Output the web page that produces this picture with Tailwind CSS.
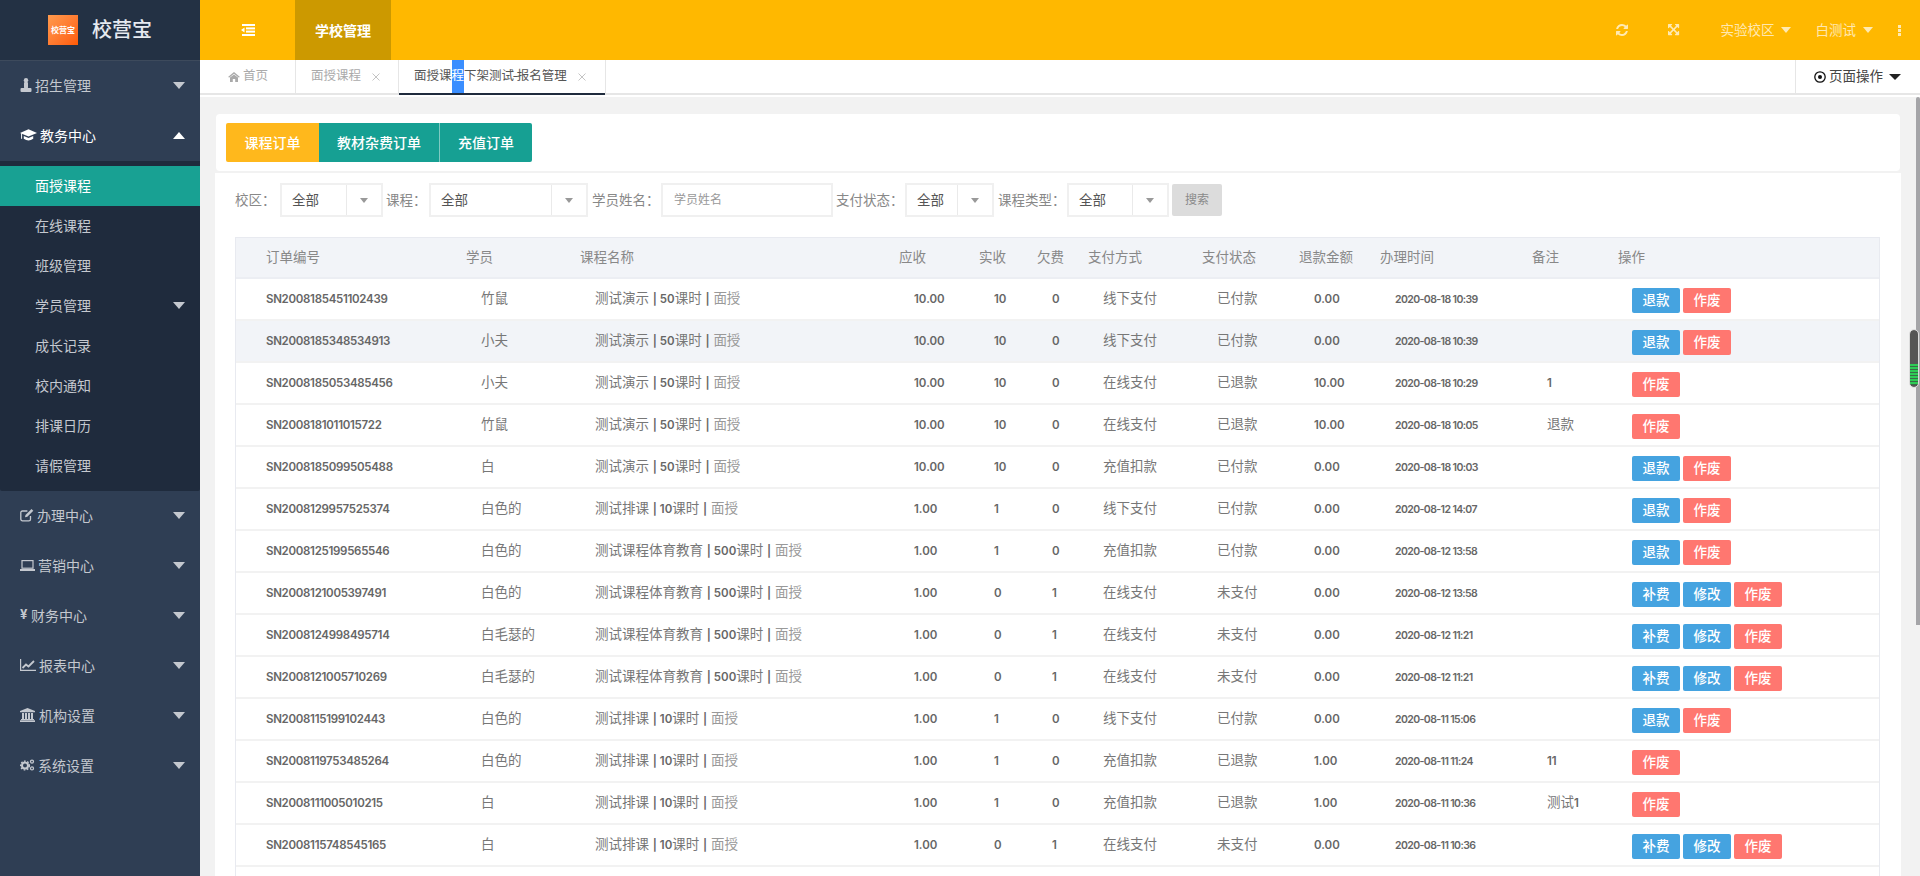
<!DOCTYPE html>
<html lang="zh">
<head>
<meta charset="utf-8">
<title>校营宝</title>
<script src="https://cdn.jsdelivr.net/npm/@tailwindcss/browser@4"></script>
</head>
<body class="m-0 overflow-hidden">
<div class="relative flex w-[1920px] h-[876px] overflow-hidden bg-[#f2f2f2] font-['Inter','Noto_Sans_CJK_SC',sans-serif] text-[13.5px] text-[#777]">

  <!-- sidebar -->
  <aside class="w-[200px] shrink-0 flex flex-col bg-[#2f3e54] text-[14px] text-[#c4c8cf]">
    <div class="h-[61px] shrink-0 flex items-center pl-[48px] gap-[14px] bg-[#233144] border-b border-[#3d4a5c]">
      <div class="w-[30px] h-[30px] flex items-center justify-center bg-gradient-to-br from-[#ff9a4d] to-[#ff5a00] text-white text-[8px] font-bold whitespace-nowrap">校营宝</div>
      <span class="text-[20px] font-medium text-[#e6eaf0]">校营宝</span>
    </div>
    <nav class="[&>div]:h-[50px] [&>div]:flex [&>div]:items-center [&>div]:pl-[20px] [&>div]:pr-[15px] [&>div]:pb-[2px]">
      <div>
        <svg class="w-[12px] h-[14px] mr-[3px]" viewBox="0 0 12 14" fill="currentColor"><circle cx="6" cy="2.3" r="2.2"/><rect x="4" y="4" width="4" height="6.5" rx="1"/><rect x="0.5" y="10" width="11" height="4" rx="1"/></svg>
        <span>招生管理</span>
        <i class="ml-auto w-0 h-0 border-x-[6px] border-x-transparent border-t-[7px] border-t-[#c4c8cf]"></i>
      </div>
      <div class="text-white">
        <svg class="w-[17px] h-[13px] mr-[3px]" viewBox="0 0 18 13" fill="currentColor"><polygon points="9,0 18,3.8 9,7.6 0,3.8"/><path d="M4 7 L9 9.2 L14 7 V10 Q9 13.5 4 10 Z"/><rect x="1.2" y="4" width="1" height="6"/></svg>
        <span>教务中心</span>
        <i class="ml-auto w-0 h-0 border-x-[6px] border-x-transparent border-b-[7px] border-b-white"></i>
      </div>
    </nav>
    <ul class="h-[330px] py-[5px] bg-[#1f2b3d] rounded-b-[2px] [&>li]:h-[40px] [&>li]:flex [&>li]:items-center [&>li]:pl-[35px] [&>li]:pr-[15px] [&>li]:pb-[2px]">
      <li class="bg-[#18a193] text-white">面授课程</li>
      <li>在线课程</li>
      <li>班级管理</li>
      <li>学员管理<i class="ml-auto w-0 h-0 border-x-[6px] border-x-transparent border-t-[7px] border-t-[#c4c8cf]"></i></li>
      <li>成长记录</li>
      <li>校内通知</li>
      <li>排课日历</li>
      <li>请假管理</li>
    </ul>
    <nav class="[&>div]:h-[50px] [&>div]:flex [&>div]:items-center [&>div]:pl-[20px] [&>div]:pr-[15px] [&>div]:pb-[2px]">
      <div>
        <svg class="w-[14px] h-[14px] mr-[3px]" viewBox="0 0 14 14" fill="none" stroke="currentColor" stroke-width="1.3"><path d="M10.5 8v3.2a1.6 1.6 0 0 1-1.6 1.6H2.4a1.6 1.6 0 0 1-1.6-1.6V4.6A1.6 1.6 0 0 1 2.4 3h5"/><path d="M5.5 7 L11.5 1 L13.3 2.8 L7.3 8.8 L5 9.3 Z" fill="currentColor" stroke="none"/></svg>
        <span>办理中心</span>
        <i class="ml-auto w-0 h-0 border-x-[6px] border-x-transparent border-t-[7px] border-t-[#c4c8cf]"></i>
      </div>
      <div>
        <svg class="w-[15px] h-[11px] mr-[3px]" viewBox="0 0 15 11" fill="none" stroke="currentColor" stroke-width="1.2"><rect x="2" y="0.6" width="11" height="7.6"/><rect x="0" y="9" width="15" height="2" fill="currentColor" stroke="none"/></svg>
        <span>营销中心</span>
        <i class="ml-auto w-0 h-0 border-x-[6px] border-x-transparent border-t-[7px] border-t-[#c4c8cf]"></i>
      </div>
      <div>
        <span class="w-[8px] mr-[3px] font-bold text-[13px]">¥</span>
        <span>财务中心</span>
        <i class="ml-auto w-0 h-0 border-x-[6px] border-x-transparent border-t-[7px] border-t-[#c4c8cf]"></i>
      </div>
      <div>
        <svg class="w-[16px] h-[12px] mr-[3px]" viewBox="0 0 16 12" fill="none" stroke="currentColor"><path d="M0.6 0V11.4H16" stroke-width="1.2"/><path d="M2.5 9 L6 5.5 L8.5 7.5 L14 2" stroke-width="1.8"/></svg>
        <span>报表中心</span>
        <i class="ml-auto w-0 h-0 border-x-[6px] border-x-transparent border-t-[7px] border-t-[#c4c8cf]"></i>
      </div>
      <div>
        <svg class="w-[15px] h-[14px] mr-[4px]" viewBox="0 0 15 14" fill="currentColor"><polygon points="7.5,0 15,3 15,4.2 0,4.2 0,3"/><rect x="2" y="5" width="2" height="6"/><rect x="5" y="5" width="2" height="6"/><rect x="8" y="5" width="2" height="6"/><rect x="11" y="5" width="2" height="6"/><rect x="1" y="11" width="13" height="1"/><rect x="0" y="12.3" width="15" height="1.7"/></svg>
        <span>机构设置</span>
        <i class="ml-auto w-0 h-0 border-x-[6px] border-x-transparent border-t-[7px] border-t-[#c4c8cf]"></i>
      </div>
      <div>
        <svg class="w-[15px] h-[12px] mr-[3px]" viewBox="0 0 15 12" fill="none" stroke="currentColor"><circle cx="5" cy="6.5" r="3" stroke-width="2"/><circle cx="5" cy="6.5" r="4.4" stroke-width="1.4" stroke-dasharray="1.7 1.5"/><circle cx="12" cy="2.6" r="1.5" stroke-width="1.3"/><circle cx="12" cy="9.4" r="1.5" stroke-width="1.3"/></svg>
        <span>系统设置</span>
        <i class="ml-auto w-0 h-0 border-x-[6px] border-x-transparent border-t-[7px] border-t-[#c4c8cf]"></i>
      </div>
    </nav>
  </aside>

  <!-- main -->
  <div class="flex-1 flex flex-col min-w-0">
    <header class="h-[60px] shrink-0 flex items-center bg-[#ffb800] text-[13.5px] text-white/70">
      <div class="w-[95px] flex justify-center">
        <svg class="w-[14px] h-[12px]" viewBox="0 0 14 12" fill="white"><rect x="1" y="0" width="13" height="2"/><rect x="5" y="3.4" width="9" height="2"/><rect x="5" y="6.6" width="9" height="2"/><rect x="1" y="10" width="13" height="2"/><polygon points="0,6 3.5,3.5 3.5,8.5"/></svg>
      </div>
      <div class="w-[96px] h-full flex items-center justify-center bg-[#cc9900] text-[14px] text-white font-semibold">学校管理</div>
      <div class="ml-auto flex items-center pr-[19px]">
        <svg class="w-[14px] h-[14px] mr-[39px]" viewBox="0 0 1792 1792" fill="currentColor"><path d="M1639 1056q0 5-1 7-64 268-268 434.5t-478 166.5q-146 0-282.5-55t-243.5-157l-129 129q-19 19-45 19t-45-19-19-45v-448q0-26 19-45t45-19h448q26 0 45 19t19 45-19 45l-137 137q71 66 161 102t187 36q134 0 250-65t186-179q11-17 53-117 8-23 30-23h192q13 0 22.5 9.5t9.5 22.5zm25-800v448q0 26-19 45t-45 19h-448q-26 0-45-19t-19-45 19-45l138-138q-148-137-349-137-134 0-250 65t-186 179q-11 17-53 117-8 23-30 23h-199q-13 0-22.5-9.5t-9.5-22.5v-7q65-268 270-434.5t480-166.5q146 0 284 55.5t245 156.5l130-129q19-19 45-19t45 19 19 45z"/></svg>
        <svg class="w-[13px] h-[13px] mr-[40px]" viewBox="0 0 1792 1792" fill="currentColor"><path d="M1283 413l-355 355 355 355 144-144q29-31 70-14 39 17 39 59v448q0 26-19 45t-45 19h-448q-42 0-59-40-17-39 14-69l144-144-355-355-355 355 144 144q31 30 14 69-17 40-59 40h-448q-26 0-45-19t-19-45v-448q0-42 40-59 39-17 69 14l144 144 355-355-355-355-144 144q-19 19-45 19-9 0-24-5-40-17-40-59v-448q0-26 19-45t45-19h448q42 0 59 40 17 39-14 69l-144 144 355 355 355-355-144-144q-31-30-14-69 17-40 59-40h448q26 0 45 19t19 45v448q0 42-39 59-13 5-25 5-26 0-45-19z"/></svg>
        <span>实验校区</span>
        <i class="ml-[6px] mr-[25px] w-0 h-0 border-x-[5.5px] border-x-transparent border-t-[6px] border-t-white/70"></i>
        <span>白测试</span>
        <i class="ml-[7px] mr-[25px] w-0 h-0 border-x-[5.5px] border-x-transparent border-t-[6px] border-t-white/70"></i>
        <div class="flex flex-col gap-[1px] [&>i]:block [&>i]:w-[3px] [&>i]:h-[3px] [&>i]:bg-white/70"><i></i><i></i><i></i></div>
      </div>
    </header>

    <div class="shrink-0 bg-white pb-[2px]">
      <div class="h-[35px] flex border-b-2 border-[#e6e6e6] text-[12.5px] text-[#aaa]">
        <div class="w-[96px] flex items-center pl-[28px] border-r border-[#e6e6e6]">
          <svg class="w-[12px] h-[10px] mr-[3px]" viewBox="0 0 12 10" fill="currentColor"><polygon points="6,0 12,5 10.6,5.6 6,1.8 1.4,5.6 0,5"/><polygon points="2,5.6 6,2.6 10,5.6 10,10 7.2,10 7.2,7 4.8,7 4.8,10 2,10"/></svg>
          <span>首页</span>
        </div>
        <div class="w-[103px] flex items-center pl-[15px] border-r border-[#e6e6e6]">
          <span>面授课程</span>
          <svg class="w-[8px] h-[8px] ml-[11px]" viewBox="0 0 8 8" stroke="#c4c4c4" stroke-width="1"><path d="M0.5 0.5 L7.5 7.5 M7.5 0.5 L0.5 7.5"/></svg>
        </div>
        <div class="relative w-[207px] h-[33px] flex items-center pl-[15px] border-r border-[#e6e6e6] text-[#555]">
          <span>面授课</span><span class="self-stretch flex items-center bg-[#3a8eff] text-white">程</span><span>下架测试<span class="mx-[-1.5px]">-</span>报名管理</span>
          <svg class="w-[8px] h-[8px] ml-[11px]" viewBox="0 0 8 8" stroke="#c4c4c4" stroke-width="1"><path d="M0.5 0.5 L7.5 7.5 M7.5 0.5 L0.5 7.5"/></svg>
          <div class="absolute left-0 right-0 top-[33px] h-[2px] bg-[#1f2b3d]"></div>
        </div>
        <div class="ml-auto w-[125px] flex items-center pl-[18px] border-l border-[#e6e6e6] text-[13.5px] text-[#444]">
          <svg class="w-[12px] h-[12px] mr-[3px]" viewBox="0 0 12 12"><circle cx="6" cy="6" r="5.2" fill="none" stroke="#111" stroke-width="1.3"/><circle cx="6" cy="6" r="2" fill="#111"/></svg>
          <span>页面操作</span>
          <i class="ml-[6px] w-0 h-0 border-x-[6px] border-x-transparent border-t-[6px] border-t-[#222]"></i>
        </div>
      </div>
    </div>

    <main class="flex-1 min-h-0 pt-[17px] pl-[15px] pr-[19px]">
      <div class="h-[57px] ml-[1px] mr-[1px] pt-[9px] pl-[10px] bg-white rounded-[4px]">
        <div class="flex h-[39px] text-[14px] font-medium text-white [&>div]:flex [&>div]:items-center [&>div]:justify-center [&>div]:pb-[1px]">
          <div class="w-[93px] bg-[#ffb81c] rounded-l-[2px]">课程订单</div>
          <div class="w-[121px] bg-[#16a093] border-r border-[#7fcac2]">教材杂费订单</div>
          <div class="w-[92px] bg-[#16a093] rounded-r-[2px]">充值订单</div>
        </div>
      </div>

      <section class="mt-[2px] h-[703px] bg-white pt-[10px] pl-[20px] overflow-hidden">
        <div class="flex items-center h-[34px] text-[#888] [&_em]:not-italic [&_em]:text-[#555] [&_em]:pl-[10px]">
          <span class="w-[45px]">校区：</span>
          <div class="w-[103px] h-full flex border-2 border-[#f0f0f0] items-center"><em class="flex-1">全部</em><div class="w-[35px] h-full flex items-center justify-center border-l border-[#eaeaea]"><i class="w-0 h-0 border-x-[4px] border-x-transparent border-t-[5px] border-t-[#999]"></i></div></div>
          <span class="w-[43px] ml-[3px]">课程：</span>
          <div class="w-[159px] h-full flex border-2 border-[#f0f0f0] items-center"><em class="flex-1">全部</em><div class="w-[35px] h-full flex items-center justify-center border-l border-[#eaeaea]"><i class="w-0 h-0 border-x-[4px] border-x-transparent border-t-[5px] border-t-[#999]"></i></div></div>
          <span class="w-[69px] ml-[4px]">学员姓名：</span>
          <div class="w-[172px] h-full flex items-center pl-[11px] border-2 border-[#f0f0f0] text-[12px] text-[#999]">学员姓名</div>
          <span class="w-[69px] ml-[3px]">支付状态：</span>
          <div class="w-[89px] h-full flex border-2 border-[#f0f0f0] items-center"><em class="flex-1">全部</em><div class="w-[35px] h-full flex items-center justify-center border-l border-[#eaeaea]"><i class="w-0 h-0 border-x-[4px] border-x-transparent border-t-[5px] border-t-[#999]"></i></div></div>
          <span class="w-[69px] ml-[4px]">课程类型：</span>
          <div class="w-[102px] h-full flex border-2 border-[#f0f0f0] items-center"><em class="flex-1">全部</em><div class="w-[35px] h-full flex items-center justify-center border-l border-[#eaeaea]"><i class="w-0 h-0 border-x-[4px] border-x-transparent border-t-[5px] border-t-[#999]"></i></div></div>
          <div class="w-[50px] h-[32px] ml-[3px] flex items-center justify-center bg-[#dcdcdc] rounded-[2px] text-[12px] text-[#8a8a8a]">搜索</div>
        </div>

        <div class="mt-[20px] w-[1645px] border-x border-t border-[#e8eaf0]">
          <table class="w-[1643px] table-fixed border-separate border-spacing-0 text-left
            [&_th]:h-[41px] [&_th]:font-normal [&_th]:text-[#888] [&_th]:bg-[#f2f4f8] [&_th]:border-b-2 [&_th]:border-[#eceef3]
            [&_td]:h-[42px] [&_td]:pl-[15px] [&_td]:pb-[2px] [&_td]:border-b-2 [&_td]:border-[#f2f2f2] [&_td]:whitespace-nowrap
            [&_td:first-child]:pl-[30px] [&_th:first-child]:pl-[30px] [&_td:last-child]:pl-[14px]
            [&_b]:font-semibold [&_b]:text-[#666] [&_b]:text-[11.5px] [&_td:first-child_b]:tracking-[-0.3px]
            [&_s]:no-underline [&_s]:text-[#999]
            [&_time]:font-semibold [&_time]:text-[#666] [&_time]:text-[10.5px] [&_time]:tracking-[-0.6px]
            [&_a]:inline-flex [&_a]:items-center [&_a]:justify-center [&_a]:w-[48px] [&_a]:h-[25px] [&_a]:mr-[3px] [&_a]:mt-[5px] [&_a]:rounded-[2px] [&_a]:text-white [&_a]:font-medium [&_a]:align-top">
            <colgroup>
              <col class="w-[230px]"><col class="w-[114px]"><col class="w-[319px]"><col class="w-[80px]"><col class="w-[58px]"><col class="w-[51px]"><col class="w-[114px]"><col class="w-[97px]"><col class="w-[81px]"><col class="w-[152px]"><col class="w-[86px]"><col>
            </colgroup>
            <thead>
              <tr><th>订单编号</th><th>学员</th><th>课程名称</th><th>应收</th><th>实收</th><th>欠费</th><th>支付方式</th><th>支付状态</th><th>退款金额</th><th>办理时间</th><th>备注</th><th>操作</th></tr>
            </thead>
            <tbody>
              <tr><td><b>SN2008185451102439</b></td><td>竹鼠</td><td>测试演示 <b>| 50</b>课时 <b>|</b> <s>面授</s></td><td><b>10.00</b></td><td><b>10</b></td><td><b>0</b></td><td>线下支付</td><td>已付款</td><td><b>0.00</b></td><td><time>2020-08-18 10:39</time></td><td></td><td><a class="bg-[#45a3e0]">退款</a><a class="bg-[#ff7770]">作废</a></td></tr>
              <tr class="bg-[#f2f4f8]"><td><b>SN2008185348534913</b></td><td>小夫</td><td>测试演示 <b>| 50</b>课时 <b>|</b> <s>面授</s></td><td><b>10.00</b></td><td><b>10</b></td><td><b>0</b></td><td>线下支付</td><td>已付款</td><td><b>0.00</b></td><td><time>2020-08-18 10:39</time></td><td></td><td><a class="bg-[#45a3e0]">退款</a><a class="bg-[#ff7770]">作废</a></td></tr>
              <tr><td><b>SN2008185053485456</b></td><td>小夫</td><td>测试演示 <b>| 50</b>课时 <b>|</b> <s>面授</s></td><td><b>10.00</b></td><td><b>10</b></td><td><b>0</b></td><td>在线支付</td><td>已退款</td><td><b>10.00</b></td><td><time>2020-08-18 10:29</time></td><td><b>1</b></td><td><a class="bg-[#ff7770]">作废</a></td></tr>
              <tr><td><b>SN2008181011015722</b></td><td>竹鼠</td><td>测试演示 <b>| 50</b>课时 <b>|</b> <s>面授</s></td><td><b>10.00</b></td><td><b>10</b></td><td><b>0</b></td><td>在线支付</td><td>已退款</td><td><b>10.00</b></td><td><time>2020-08-18 10:05</time></td><td>退款</td><td><a class="bg-[#ff7770]">作废</a></td></tr>
              <tr><td><b>SN2008185099505488</b></td><td>白</td><td>测试演示 <b>| 50</b>课时 <b>|</b> <s>面授</s></td><td><b>10.00</b></td><td><b>10</b></td><td><b>0</b></td><td>充值扣款</td><td>已付款</td><td><b>0.00</b></td><td><time>2020-08-18 10:03</time></td><td></td><td><a class="bg-[#45a3e0]">退款</a><a class="bg-[#ff7770]">作废</a></td></tr>
              <tr><td><b>SN2008129957525374</b></td><td>白色的</td><td>测试排课 <b>| 10</b>课时 <b>|</b> <s>面授</s></td><td><b>1.00</b></td><td><b>1</b></td><td><b>0</b></td><td>线下支付</td><td>已付款</td><td><b>0.00</b></td><td><time>2020-08-12 14:07</time></td><td></td><td><a class="bg-[#45a3e0]">退款</a><a class="bg-[#ff7770]">作废</a></td></tr>
              <tr><td><b>SN2008125199565546</b></td><td>白色的</td><td>测试课程体育教育 <b>| 500</b>课时 <b>|</b> <s>面授</s></td><td><b>1.00</b></td><td><b>1</b></td><td><b>0</b></td><td>充值扣款</td><td>已付款</td><td><b>0.00</b></td><td><time>2020-08-12 13:58</time></td><td></td><td><a class="bg-[#45a3e0]">退款</a><a class="bg-[#ff7770]">作废</a></td></tr>
              <tr><td><b>SN2008121005397491</b></td><td>白色的</td><td>测试课程体育教育 <b>| 500</b>课时 <b>|</b> <s>面授</s></td><td><b>1.00</b></td><td><b>0</b></td><td><b>1</b></td><td>在线支付</td><td>未支付</td><td><b>0.00</b></td><td><time>2020-08-12 13:58</time></td><td></td><td><a class="bg-[#45a3e0]">补费</a><a class="bg-[#45a3e0]">修改</a><a class="bg-[#ff7770]">作废</a></td></tr>
              <tr><td><b>SN2008124998495714</b></td><td>白毛瑟的</td><td>测试课程体育教育 <b>| 500</b>课时 <b>|</b> <s>面授</s></td><td><b>1.00</b></td><td><b>0</b></td><td><b>1</b></td><td>在线支付</td><td>未支付</td><td><b>0.00</b></td><td><time>2020-08-12 11:21</time></td><td></td><td><a class="bg-[#45a3e0]">补费</a><a class="bg-[#45a3e0]">修改</a><a class="bg-[#ff7770]">作废</a></td></tr>
              <tr><td><b>SN2008121005710269</b></td><td>白毛瑟的</td><td>测试课程体育教育 <b>| 500</b>课时 <b>|</b> <s>面授</s></td><td><b>1.00</b></td><td><b>0</b></td><td><b>1</b></td><td>在线支付</td><td>未支付</td><td><b>0.00</b></td><td><time>2020-08-12 11:21</time></td><td></td><td><a class="bg-[#45a3e0]">补费</a><a class="bg-[#45a3e0]">修改</a><a class="bg-[#ff7770]">作废</a></td></tr>
              <tr><td><b>SN2008115199102443</b></td><td>白色的</td><td>测试排课 <b>| 10</b>课时 <b>|</b> <s>面授</s></td><td><b>1.00</b></td><td><b>1</b></td><td><b>0</b></td><td>线下支付</td><td>已付款</td><td><b>0.00</b></td><td><time>2020-08-11 15:06</time></td><td></td><td><a class="bg-[#45a3e0]">退款</a><a class="bg-[#ff7770]">作废</a></td></tr>
              <tr><td><b>SN2008119753485264</b></td><td>白色的</td><td>测试排课 <b>| 10</b>课时 <b>|</b> <s>面授</s></td><td><b>1.00</b></td><td><b>1</b></td><td><b>0</b></td><td>充值扣款</td><td>已退款</td><td><b>1.00</b></td><td><time>2020-08-11 11:24</time></td><td><b>11</b></td><td><a class="bg-[#ff7770]">作废</a></td></tr>
              <tr><td><b>SN2008111005010215</b></td><td>白</td><td>测试排课 <b>| 10</b>课时 <b>|</b> <s>面授</s></td><td><b>1.00</b></td><td><b>1</b></td><td><b>0</b></td><td>充值扣款</td><td>已退款</td><td><b>1.00</b></td><td><time>2020-08-11 10:36</time></td><td>测试<b>1</b></td><td><a class="bg-[#ff7770]">作废</a></td></tr>
              <tr><td><b>SN2008115748545165</b></td><td>白</td><td>测试排课 <b>| 10</b>课时 <b>|</b> <s>面授</s></td><td><b>1.00</b></td><td><b>0</b></td><td><b>1</b></td><td>在线支付</td><td>未支付</td><td><b>0.00</b></td><td><time>2020-08-11 10:36</time></td><td></td><td><a class="bg-[#45a3e0]">补费</a><a class="bg-[#45a3e0]">修改</a><a class="bg-[#ff7770]">作废</a></td></tr>
              <tr><td colspan="12"></td></tr>
            </tbody>
          </table>
        </div>
      </section>
    </main>
  </div>

  <!-- page scrollbar overlay -->
  <div class="absolute right-0 top-[97px] w-[4px] h-[528px] bg-[#a5a5a8] rounded-t-[2px]"></div>
  <div class="absolute right-[2px] top-[330px] w-[8px] h-[57px] flex flex-col justify-end bg-[#555] rounded-[4px] overflow-hidden pb-[2px] outline outline-1 outline-[#ddd]">
    <div class="h-[21px] bg-[repeating-linear-gradient(to_bottom,#2ecc55_0,#2ecc55_2px,#3a6b48_2px,#3a6b48_3px)]"></div>
  </div>
</div>
</body>
</html>
